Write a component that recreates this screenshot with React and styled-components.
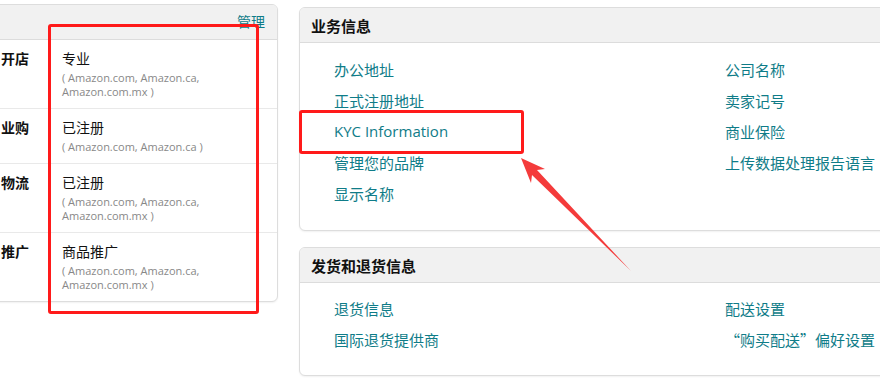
import React from 'react'
import styled, { createGlobalStyle } from 'styled-components'

const GlobalStyle = createGlobalStyle`
  html, body {
    margin: 0;
    padding: 0;
    background: #fff;
  }
  body {
    font-family: "Open Sans", "Noto Sans CJK SC", sans-serif;
    color: #111;
    overflow: hidden;
  }
`

const programs = [
  { label: '开店', value: '专业', markets: ['( Amazon.com, Amazon.ca,', 'Amazon.com.mx )'] },
  { label: '业购', value: '已注册', markets: ['( Amazon.com, Amazon.ca )'] },
  { label: '物流', value: '已注册', markets: ['( Amazon.com, Amazon.ca,', 'Amazon.com.mx )'] },
  { label: '推广', value: '商品推广', markets: ['( Amazon.com, Amazon.ca,', 'Amazon.com.mx )'] },
]

const businessLeft = ['办公地址', '正式注册地址', 'KYC Information', '管理您的品牌', '显示名称']
const businessRight = ['公司名称', '卖家记号', '商业保险', '上传数据处理报告语言']
const shippingLeft = ['退货信息', '国际退货提供商']
const shippingRight = ['配送设置', '“购买配送”偏好设置']

const Page = styled.div`
  position: relative;
  width: 880px;
  height: 383px;
  display: flex;
  align-items: flex-start;
  gap: 21px;
  overflow: hidden;
`

const Panel = styled.section`
  background: #fff;
  border: 1px solid #dddddd;
  border-radius: 6px;
  box-shadow: 0 1px 2px rgba(0, 0, 0, 0.06);
  overflow: hidden;
`

const LeftPanel = styled(Panel)`
  margin-left: -10px;
  margin-top: 4px;
  width: 286px;
  flex-shrink: 0;
`

const RightColumn = styled.div`
  flex: 1;
  margin-top: 7px;
  margin-right: -40px;
  display: flex;
  flex-direction: column;
  gap: 16px;
`

const Header = styled.div`
  height: 34px;
  background: #f1f1f1;
  border-bottom: 1px solid #dcdcdc;
  display: flex;
  align-items: center;
  justify-content: ${p => (p.$right ? 'flex-end' : 'flex-start')};
  padding: 0 11px;
  font-family: "Noto Sans CJK SC", sans-serif;
  font-size: 15px;
  font-weight: 700;
  color: #111;
`

const Manage = styled.a`
  font-family: "Noto Sans CJK SC", sans-serif;
  font-size: 14px;
  font-weight: 400;
  color: #0f7c88;
  margin-top: -2px;
  margin-right: 1px;
`

const Row = styled.div`
  display: grid;
  grid-template-columns: 71px 1fr;
  padding: 9px 0;
  border-bottom: ${p => (p.$last ? 'none' : '1px solid #e9e9e9')};
`

const Label = styled.div`
  font-family: "Noto Sans CJK SC", sans-serif;
  font-size: 14px;
  font-weight: 700;
  line-height: 18px;
  padding-left: 10px;
`

const Value = styled.div`
  font-family: "Noto Sans CJK SC", sans-serif;
  font-size: 14px;
  line-height: 18px;
  color: #111;
  margin-bottom: 4px;
`

const Market = styled.div`
  font-size: 11px;
  line-height: 14px;
  color: #888;
`

const LinkGrid = styled.div`
  display: grid;
  grid-template-columns: 391px 1fr;
  padding: ${p => p.$pad};
`

const LinkCol = styled.div`
  display: flex;
  flex-direction: column;
`

const LinkItem = styled.a`
  font-family: ${p => (p.$latin ? '"Open Sans", sans-serif' : '"Noto Sans CJK SC", sans-serif')};
  font-size: 15px;
  line-height: 31px;
  color: #0f7c88;
  white-space: nowrap;
`

const Frame = styled.div`
  position: absolute;
  left: ${p => p.$x}px;
  top: ${p => p.$y}px;
  width: ${p => p.$w}px;
  height: ${p => p.$h}px;
  border: 3px solid #ff1a1a;
  border-radius: 3px;
  box-sizing: border-box;
  pointer-events: none;
`

const Overlay = styled.svg`
  position: absolute;
  left: 0;
  top: 0;
  pointer-events: none;
`

const Links = ({ items }) => (
  <LinkCol>
    {items.map(t => (
      <LinkItem key={t} $latin={/^[A-Za-z ]+$/.test(t)}>{t}</LinkItem>
    ))}
  </LinkCol>
)

export default function App() {
  return (
    <Page>
      <GlobalStyle />
      <LeftPanel>
        <Header $right>
          <Manage>管理</Manage>
        </Header>
        {programs.map((p, i) => (
          <Row key={p.label} $last={i === programs.length - 1}>
            <Label>{p.label}</Label>
            <div>
              <Value>{p.value}</Value>
              {p.markets.map(m => (
                <Market key={m}>{m}</Market>
              ))}
            </div>
          </Row>
        ))}
      </LeftPanel>

      <RightColumn>
        <Panel>
          <Header>业务信息</Header>
          <LinkGrid $pad="11px 0 21px 34px">
            <Links items={businessLeft} />
            <Links items={businessRight} />
          </LinkGrid>
        </Panel>
        <Panel>
          <Header>发货和退货信息</Header>
          <LinkGrid $pad="10px 0 20px 34px">
            <Links items={shippingLeft} />
            <Links items={shippingRight} />
          </LinkGrid>
        </Panel>
      </RightColumn>

      <Frame $x={48} $y={24} $w={211} $h={290} />
      <Frame $x={299} $y={110} $w={225} $h={44} />
      <Overlay width="880" height="383" viewBox="0 0 880 383">
        <polygon
          points="521,158 545,169 537,170 631,271 532,175 531,183"
          fill="#f43b3b"
        />
      </Overlay>
    </Page>
  )
}
